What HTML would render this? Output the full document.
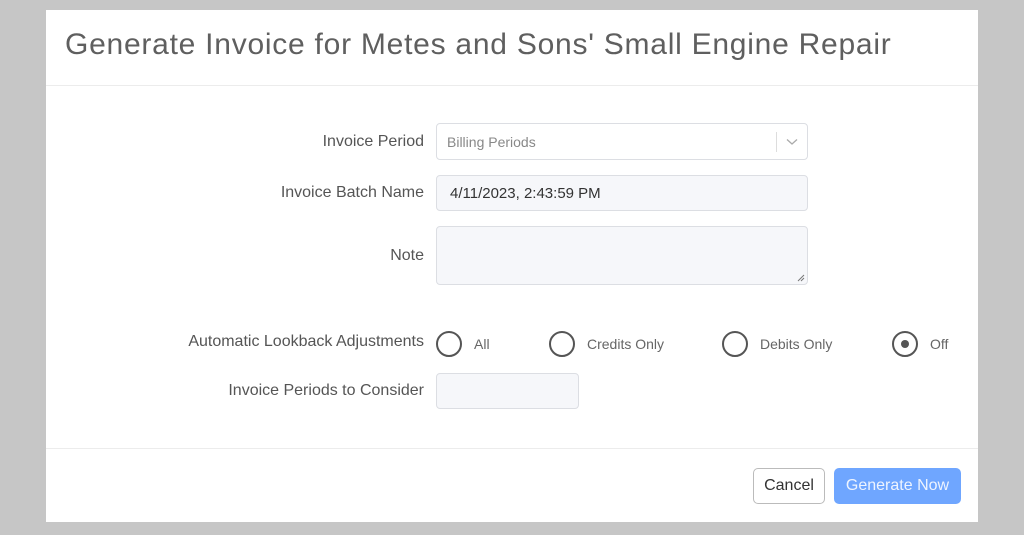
<!DOCTYPE html>
<html><head><style>
*{box-sizing:border-box;margin:0;padding:0}
body{width:1024px;height:535px;background:#c6c6c6;font-family:"Liberation Sans",sans-serif;position:relative;overflow:hidden}
.modal{position:absolute;left:46px;top:10px;width:932px;height:512px;background:#fff}
.title{position:absolute;left:19px;top:18px;font-size:30px;color:#5f5f5f;white-space:nowrap;letter-spacing:0.75px}
.hr{position:absolute;left:0;width:932px;height:1px;background:#ececec}
.lbl{position:absolute;right:554px;font-size:16px;color:#555;white-space:nowrap;text-align:right}
.box{position:absolute;left:390px;border:1px solid #dcdee3;border-radius:4px;background:#f6f7fa}
.radio{position:absolute;width:26px;height:26px;border:2px solid #555;border-radius:50%;top:321px}
.rl{position:absolute;top:326px;font-size:14px;color:#666}
.btn{position:absolute;top:458px;height:36px;border-radius:5px;font-size:16px;line-height:34px;text-align:center}
</style></head><body>
<div class="modal">
<div class="title">Generate Invoice for Metes and Sons' Small Engine Repair</div>
<div class="hr" style="top:75px"></div>
<div class="lbl" style="top:123px">Invoice Period</div>
<div class="box" style="top:113px;width:372px;height:37px;background:#fff;">
<span style="position:absolute;left:10px;top:10px;font-size:14px;color:#888">Billing Periods</span>
<span style="position:absolute;left:339px;top:8px;width:1px;height:20px;background:#ddd"></span>
<svg style="position:absolute;left:349px;top:14px" width="12" height="8" viewBox="0 0 12 8"><path d="M1 1.5 6 6 11 1.5" fill="none" stroke="#aaa" stroke-width="1.3"/></svg>
</div>
<div class="lbl" style="top:174px">Invoice Batch Name</div>
<div class="box" style="top:165px;width:372px;height:36px;">
<span style="position:absolute;left:13px;top:9px;font-size:15px;color:#333">4/11/2023, 2:43:59 PM</span></div>
<div class="lbl" style="top:237px">Note</div>
<div class="box" style="top:216px;width:372px;height:59px;">
<svg style="position:absolute;right:2px;bottom:2px" width="8" height="8"><path d="M1 7 7 1M4 7 7 4" stroke="#777" stroke-width="1"/></svg></div>
<div class="lbl" style="top:323px">Automatic Lookback Adjustments</div>
<div class="radio" style="left:390px"></div><div class="rl" style="left:428px">All</div>
<div class="radio" style="left:503px"></div><div class="rl" style="left:541px">Credits Only</div>
<div class="radio" style="left:676px"></div><div class="rl" style="left:714px">Debits Only</div>
<div class="radio" style="left:846px"><div style="position:absolute;left:7px;top:7px;width:8px;height:8px;border-radius:50%;background:#555"></div></div><div class="rl" style="left:884px">Off</div>
<div class="lbl" style="top:372px">Invoice Periods to Consider</div>
<div class="box" style="top:363px;width:143px;height:36px;"></div>
<div class="hr" style="top:438px"></div>
<div class="btn" style="left:707px;width:72px;border:1px solid #bbb;color:#333;background:#fff">Cancel</div>
<div class="btn" style="left:788px;width:127px;background:#6fa6ff;color:#eef4ff;line-height:36px">Generate Now</div>
</div>
</body></html>
